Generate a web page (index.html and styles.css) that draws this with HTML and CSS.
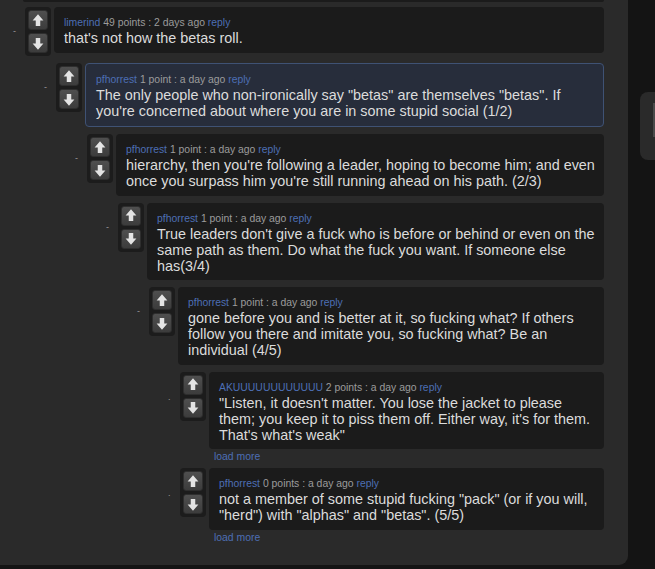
FILE: index.html
```html
<!DOCTYPE html>
<html>
<head>
<meta charset="utf-8">
<link rel="stylesheet" href="styles.css">
</head>
<body>
<div class="page">
  <div class="panel">
    <div class="parent-tail"></div>
    <div class="thread">
      <div class="comment">
        <div class="row">
          <span class="toggle">-</span>
          <div class="vote">
            <button class="vbtn"><svg viewBox="0 0 20 20"><path d="M10 3 L16 10 L12.5 10 L12.5 16 L7.5 16 L7.5 10 L4 10 Z"/></svg></button>
            <button class="vbtn"><svg viewBox="0 0 20 20"><path d="M10 17 L16 10 L12.5 10 L12.5 4 L7.5 4 L7.5 10 L4 10 Z"/></svg></button>
          </div>
          <div class="col">
            <div class="box">
              <div class="meta"><a class="user">limerind</a> 49 points : 2 days ago <a class="link">reply</a></div>
              <div class="text">that's not how the betas roll.</div>
            </div>
          </div>
        </div>
        <div class="children">
          <div class="comment">
            <div class="row">
              <span class="toggle">-</span>
              <div class="vote">
                <button class="vbtn"><svg viewBox="0 0 20 20"><path d="M10 3 L16 10 L12.5 10 L12.5 16 L7.5 16 L7.5 10 L4 10 Z"/></svg></button>
                <button class="vbtn"><svg viewBox="0 0 20 20"><path d="M10 17 L16 10 L12.5 10 L12.5 4 L7.5 4 L7.5 10 L4 10 Z"/></svg></button>
              </div>
              <div class="col">
                <div class="box highlight">
                  <div class="meta"><a class="user">pfhorrest</a> 1 point : a day ago <a class="link">reply</a></div>
                  <div class="text">The only people who non-ironically say "betas" are themselves "betas". If you're concerned about where you are in some stupid social (1/2)</div>
                </div>
              </div>
            </div>
            <div class="children">
              <div class="comment">
                <div class="row">
                  <span class="toggle">-</span>
                  <div class="vote">
                    <button class="vbtn"><svg viewBox="0 0 20 20"><path d="M10 3 L16 10 L12.5 10 L12.5 16 L7.5 16 L7.5 10 L4 10 Z"/></svg></button>
                    <button class="vbtn"><svg viewBox="0 0 20 20"><path d="M10 17 L16 10 L12.5 10 L12.5 4 L7.5 4 L7.5 10 L4 10 Z"/></svg></button>
                  </div>
                  <div class="col">
                    <div class="box">
                      <div class="meta"><a class="user">pfhorrest</a> 1 point : a day ago <a class="link">reply</a></div>
                      <div class="text">hierarchy, then you're following a leader, hoping to become him; and even once you surpass him you're still running ahead on his path. (2/3)</div>
                    </div>
                  </div>
                </div>
                <div class="children">
                  <div class="comment">
                    <div class="row">
                      <span class="toggle">-</span>
                      <div class="vote">
                        <button class="vbtn"><svg viewBox="0 0 20 20"><path d="M10 3 L16 10 L12.5 10 L12.5 16 L7.5 16 L7.5 10 L4 10 Z"/></svg></button>
                        <button class="vbtn"><svg viewBox="0 0 20 20"><path d="M10 17 L16 10 L12.5 10 L12.5 4 L7.5 4 L7.5 10 L4 10 Z"/></svg></button>
                      </div>
                      <div class="col">
                        <div class="box">
                          <div class="meta"><a class="user">pfhorrest</a> 1 point : a day ago <a class="link">reply</a></div>
                          <div class="text">True leaders don't give a fuck who is before or behind or even on the same path as them. Do what the fuck you want. If someone else has(3/4)</div>
                        </div>
                      </div>
                    </div>
                    <div class="children">
                      <div class="comment">
                        <div class="row">
                          <span class="toggle">-</span>
                          <div class="vote">
                            <button class="vbtn"><svg viewBox="0 0 20 20"><path d="M10 3 L16 10 L12.5 10 L12.5 16 L7.5 16 L7.5 10 L4 10 Z"/></svg></button>
                            <button class="vbtn"><svg viewBox="0 0 20 20"><path d="M10 17 L16 10 L12.5 10 L12.5 4 L7.5 4 L7.5 10 L4 10 Z"/></svg></button>
                          </div>
                          <div class="col">
                            <div class="box">
                              <div class="meta"><a class="user">pfhorrest</a> 1 point : a day ago <a class="link">reply</a></div>
                              <div class="text">gone before you and is better at it, so fucking what? If others follow you there and imitate you, so fucking what? Be an individual (4/5)</div>
                            </div>
                          </div>
                        </div>
                        <div class="children">
                          <div class="comment">
                            <div class="row">
                              <span class="toggle dot">.</span>
                              <div class="vote">
                                <button class="vbtn"><svg viewBox="0 0 20 20"><path d="M10 3 L16 10 L12.5 10 L12.5 16 L7.5 16 L7.5 10 L4 10 Z"/></svg></button>
                                <button class="vbtn"><svg viewBox="0 0 20 20"><path d="M10 17 L16 10 L12.5 10 L12.5 4 L7.5 4 L7.5 10 L4 10 Z"/></svg></button>
                              </div>
                              <div class="col">
                                <div class="box">
                                  <div class="meta"><a class="user">AKUUUUUUUUUUUU</a> 2 points : a day ago <a class="link">reply</a></div>
                                  <div class="text">"Listen, it doesn't matter. You lose the jacket to please them; you keep it to piss them off. Either way, it's for them. That's what's weak"</div>
                                </div>
                                <a class="load-more">load more</a>
                              </div>
                            </div>
                          </div>
                          <div class="comment">
                            <div class="row">
                              <span class="toggle dot">.</span>
                              <div class="vote">
                                <button class="vbtn"><svg viewBox="0 0 20 20"><path d="M10 3 L16 10 L12.5 10 L12.5 16 L7.5 16 L7.5 10 L4 10 Z"/></svg></button>
                                <button class="vbtn"><svg viewBox="0 0 20 20"><path d="M10 17 L16 10 L12.5 10 L12.5 4 L7.5 4 L7.5 10 L4 10 Z"/></svg></button>
                              </div>
                              <div class="col">
                                <div class="box">
                                  <div class="meta"><a class="user">pfhorrest</a> 0 points : a day ago <a class="link">reply</a></div>
                                  <div class="text">not a member of some stupid fucking "pack" (or if you will, "herd") with "alphas" and "betas". (5/5)</div>
                                </div>
                                <a class="load-more">load more</a>
                              </div>
                            </div>
                          </div>
                        </div>
                      </div>
                    </div>
                  </div>
                </div>
              </div>
            </div>
          </div>
        </div>
      </div>
    </div>
  </div>
  <div class="side">
    <div class="scroller"><span class="scroller-line"></span></div>
  </div>
</div>
</body>
</html>
```

FILE: styles.css
```css
html, body {
  margin: 0;
  padding: 0;
  background: #141414;
}
body {
  font-family: "Liberation Sans", Arial, sans-serif;
  width: 655px;
  height: 569px;
  overflow: hidden;
}
.page {
  display: flex;
  height: 569px;
}
.panel {
  width: 628px;
  height: 565px;
  flex: none;
  background: #2a2a2a;
  border-bottom-right-radius: 9px;
  box-sizing: border-box;
  padding: 0 24px 0 13px;
  overflow: hidden;
}
.parent-tail {
  margin-left: 10px;
  height: 2px;
  background: #1b1b1b;
  border-radius: 0 0 4px 4px;
}
.thread {
  padding-top: 5px;
}
.row {
  display: flex;
  align-items: flex-start;
}
.children {
  margin-left: 31px;
}
.children .comment {
  margin-top: 7px;
}
.children .comment + .comment {
  margin-top: 6px;
}
.toggle {
  width: 12px;
  height: 49px;
  flex: none;
  display: flex;
  align-items: center;
  font-size: 9px;
  color: #9a9a9a;
  line-height: 1;
}
.toggle.dot {
  padding-top: 2px;
  box-sizing: border-box;
}
.vote {
  flex: none;
  width: 26px;
  box-sizing: border-box;
  padding: 3px;
  background: #1c1c1c;
  border-radius: 4px;
  display: flex;
  flex-direction: column;
  gap: 3px;
  margin-right: 3px;
}
.vbtn {
  width: 20px;
  height: 20px;
  padding: 0;
  border: 1px solid #2e2e2e;
  border-radius: 3px;
  background: linear-gradient(#4f4f4f, #3c3c3c);
  display: flex;
  align-items: center;
  justify-content: center;
}
.vbtn svg {
  width: 19px;
  height: 19px;
  fill: #e4e4e4;
}
.col {
  flex: 1;
  min-width: 0;
}
.box {
  background: #1b1b1b;
  border-radius: 4px;
  padding: 9px 4px 6.5px 10px;
}
.box.highlight {
  background: #272d3b;
  border: 1px solid #3f5274;
  padding: 9px 4px 7px 10px;
}
.meta {
  font-size: 10.4px;
  line-height: 13px;
  color: #9c9c9c;
  margin-bottom: 1px;
}
.user, .link, .load-more {
  color: #4d6fb5;
  text-decoration: none;
}
.text {
  font-size: 14.4px;
  line-height: 16px;
  color: #dcdcdc;
}
.load-more {
  display: block;
  font-size: 10.4px;
  line-height: 10px;
  margin: 3px 0 0 5px;
}
.side {
  flex: 1;
  padding-top: 92px;
}
.scroller {
  margin-left: 12px;
  height: 68px;
  background: #2a2a2a;
  border-radius: 8px 0 0 8px;
  position: relative;
}
.scroller-line {
  position: absolute;
  right: 0;
  top: 11px;
  width: 2px;
  height: 34px;
  background: #4a4a4a;
}
```
